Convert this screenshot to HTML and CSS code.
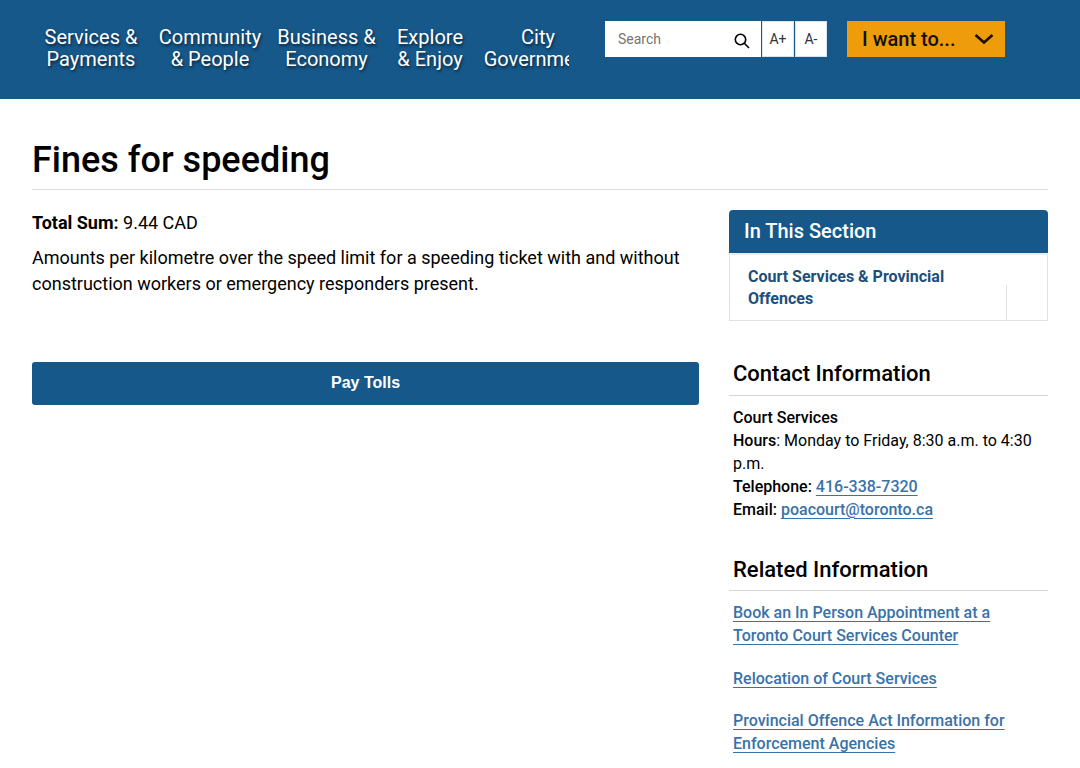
FILE: index.html
```html
<!DOCTYPE html>
<html lang="en">
<head>
    <meta charset="UTF-8">
    <meta name="viewport" content="width=device-width, initial-scale=1.0">
    <title>Fines for speeding</title>
    <link rel="stylesheet" href="styles.css">
</head>
<body>
    <!-- Header -->
    <header class="header">
        <nav class="nav">
            <a class="nav-item nav-services">Services &amp;<br>Payments</a>
            <a class="nav-item nav-community">Community<br>&amp; People</a>
            <a class="nav-item nav-business">Business &amp;<br>Economy</a>
            <a class="nav-item nav-explore">Explore<br>&amp; Enjoy</a>
            <a class="nav-item nav-city">City<br>Government</a>
        </nav>
        <div class="search-box">
            <span class="search-text">Search</span>
            <svg class="search-icon" width="18" height="18" viewBox="0 0 18 18" fill="none" stroke="#000" stroke-width="1.6">
                <circle cx="7.5" cy="7.5" r="5.2"/>
                <path d="M11.3 11.3 L16 16"/>
            </svg>
        </div>
        <a class="font-btn">A+</a>
        <a class="font-btn">A-</a>
        <a class="want-btn">
            <span>I want to...</span>
            <svg width="20" height="12" viewBox="0 0 20 12" fill="none" stroke="#1a1000" stroke-width="2.6">
                <path d="M1.5 2 L10 9.5 L18.5 2"/>
            </svg>
        </a>
    </header>

    <!-- Page -->
    <main class="page">
        <h1 class="page-title">Fines for speeding</h1>
        <div class="columns">
            <div class="main-col">
                <p class="total"><strong>Total Sum:</strong> 9.44 CAD</p>
                <p class="intro">Amounts per kilometre over the speed limit for a speeding ticket with and without construction workers or emergency responders present.</p>
                <a class="pay-btn">Pay Tolls</a>
            </div>
            <aside class="side-col">
                <div class="section-box">
                    <h2 class="section-head">In This Section</h2>
                    <div class="section-body">
                        <a class="section-link">Court Services &amp; Provincial Offences</a>
                        <span class="section-toggle"></span>
                    </div>
                </div>

                <h3 class="side-title contact-title">Contact Information</h3>
                <div class="side-text">
                    <div><strong>Court Services</strong></div>
                    <div><strong>Hours</strong>: Monday to Friday, 8:30 a.m. to 4:30 p.m.</div>
                    <div><strong>Telephone:</strong> <a class="link">416-338-7320</a></div>
                    <div><strong>Email:</strong> <a class="link">poacourt@toronto.ca</a></div>
                </div>

                <h3 class="side-title related-title">Related Information</h3>
                <ul class="related-list">
                    <li><a class="link">Book an In Person Appointment at a Toronto Court Services Counter</a></li>
                    <li><a class="link">Relocation of Court Services</a></li>
                    <li><a class="link">Provincial Offence Act Information for Enforcement Agencies</a></li>
                </ul>
            </aside>
        </div>
    </main>
</body>
</html>
```

FILE: styles.css
```css
html, body {
    height: 768px;
    overflow: hidden;
}

body {
    font-family: Roboto, 'Liberation Sans', sans-serif;
    margin: 0;
    color: #000;
    background-color: #fff;
}

a {
    cursor: pointer;
}

/* Header */
.header {
    height: 99px;
    box-sizing: border-box;
    background-color: #16588a;
    display: flex;
    align-items: flex-start;
    padding: 21px 0 0 34px;
}

.nav {
    width: 535px;
    height: 60px;
    overflow: hidden;
    display: flex;
    flex-shrink: 0;
    margin-right: 36px;
}

.nav-item {
    color: #fff;
    font-size: 20px;
    line-height: 22px;
    padding-top: 5px;
    text-align: center;
    white-space: nowrap;
    flex-shrink: 0;
    text-shadow: 1px 2px 3px rgba(0, 0, 0, 0.6);
}

.nav-services { width: 114px; }
.nav-community { width: 124px; }
.nav-business { width: 109px; }
.nav-explore { width: 98px; }
.nav-city { width: 118px; }

.search-box {
    width: 156px;
    height: 36px;
    box-sizing: border-box;
    background-color: #fff;
    display: flex;
    align-items: center;
    justify-content: space-between;
    padding: 0 10px 0 13px;
}

.search-text {
    font-size: 14px;
    color: #757575;
}

.search-icon {
    margin-top: 4px;
}

.font-btn {
    width: 32px;
    height: 36px;
    box-sizing: border-box;
    margin-left: 1px;
    background-color: #fff;
    border: 1px solid #d8e4ef;
    color: #333;
    font-size: 14px;
    line-height: 34px;
    text-align: center;
}

.want-btn {
    width: 158px;
    height: 36px;
    box-sizing: border-box;
    margin-left: 20px;
    padding: 0 11px 0 15px;
    background-color: #ee9c0b;
    color: #111;
    font-size: 20px;
    font-weight: 500;
    display: flex;
    align-items: center;
    justify-content: space-between;
}

/* Page */
.page {
    padding: 0 32px;
}

.page-title {
    font-size: 36px;
    font-weight: 500;
    line-height: 42px;
    margin: 0;
    padding: 40px 0 8px;
    border-bottom: 1px solid #ddd;
}

.columns {
    display: flex;
    gap: 30px;
    padding-top: 20px;
}

.main-col {
    width: 667px;
    flex-shrink: 0;
}

.total {
    font-size: 18px;
    line-height: 26px;
    margin: 0 0 9px;
}

.intro {
    font-size: 18px;
    line-height: 26px;
    margin: 0 0 65px;
}

.pay-btn {
    display: block;
    height: 43px;
    background-color: #16588a;
    border-radius: 3px;
    color: #fff;
    font-family: 'Liberation Sans', sans-serif;
    font-size: 16px;
    font-weight: bold;
    line-height: 41px;
    text-align: center;
}

.side-col {
    width: 319px;
    flex-shrink: 0;
}

.section-box {
    margin-bottom: 32px;
}

.section-head {
    background-color: #16588a;
    border-radius: 4px 4px 0 0;
    color: #fff;
    font-size: 20px;
    font-weight: 500;
    line-height: 43px;
    margin: 0;
    padding-left: 15px;
}

.section-body {
    height: 68px;
    box-sizing: border-box;
    border: 1px solid #e2e2e2;
    border-top: 2px solid #e6eef5;
    position: relative;
    padding: 11px 60px 0 18px;
}

.section-link {
    color: #1c4f7c;
    font-size: 16px;
    font-weight: 700;
    line-height: 22px;
}

.section-toggle {
    position: absolute;
    right: 40px;
    top: 30px;
    bottom: 0;
    border-left: 1px solid #e2e2e2;
}

.side-title {
    font-size: 22px;
    font-weight: 500;
    line-height: 26px;
    margin: 0;
    padding: 8px 4px 8px;
    border-bottom: 1px solid #d6d6d6;
}

.side-text {
    font-size: 16px;
    line-height: 23px;
    padding: 10px 4px 0;
}

.side-text strong {
    font-weight: 500;
}

.link {
    color: #3a72a8;
    font-weight: 500;
    text-decoration: underline;
    text-decoration-thickness: 1px;
    text-underline-offset: 3px;
}

.related-title {
    margin-top: 28px;
    padding-bottom: 7px;
}

.related-list {
    list-style: none;
    margin: 0;
    padding: 10px 4px 0;
    font-size: 16px;
    line-height: 23px;
}

.related-list li {
    margin-bottom: 19.6px;
}
```
